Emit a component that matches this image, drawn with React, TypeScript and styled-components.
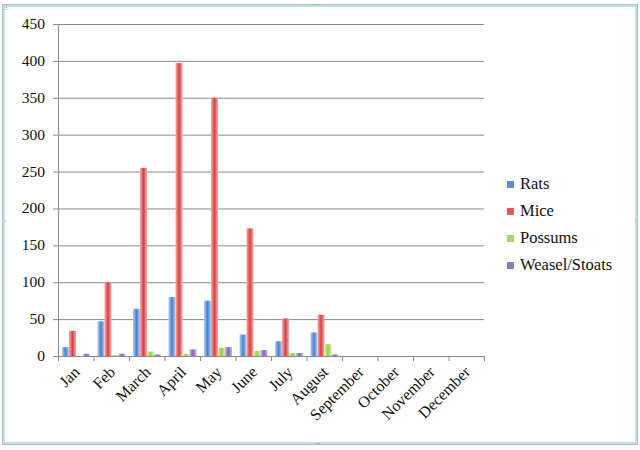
import React from 'react'
import styled, { createGlobalStyle } from 'styled-components'

const Global = createGlobalStyle`
  body { margin: 0; background: #fff; font-family: "Liberation Serif", serif; }
`

const Page = styled.div`
  width: 640px;
  height: 450px;
  padding: 5px 3px 6px 3px;
  box-sizing: border-box;
`

const Frame = styled.div`
  position: relative;
  height: 100%;
  box-sizing: border-box;
  border: 2px solid #c6dfe2;
  outline: 1px solid #9fc3c8;
  display: flex;
  align-items: center;
`

const Handle = styled.span<{ $pos: 'top' | 'bottom' | 'left' | 'right' | 'corner' }>`
  position: absolute;
  font-size: 6px;
  line-height: 6px;
  color: #6a7f86;
  letter-spacing: -1px;
  ${p => p.$pos === 'top' && 'top: -5px; left: 310px;'}
  ${p => p.$pos === 'bottom' && 'bottom: -5px; left: 310px;'}
  ${p => p.$pos === 'left' && 'left: -3px; top: 212px; writing-mode: vertical-rl;'}
  ${p => p.$pos === 'right' && 'right: -3px; top: 212px; writing-mode: vertical-rl;'}
  ${p => p.$pos === 'corner' && 'left: 0; top: -2px;'}
`

const Legend = styled.div`
  display: flex;
  flex-direction: column;
  gap: 8px;
  margin-left: 12px;
`

const LegendItem = styled.div`
  display: flex;
  align-items: center;
  gap: 6px;
  font-size: 16.5px;
  color: #111;
  height: 19px;
`

const Swatch = styled.span<{ $color: string }>`
  width: 7px;
  height: 7px;
  background: ${p => p.$color};
`

const months = ['Jan', 'Feb', 'March', 'April', 'May', 'June', 'July', 'August', 'September', 'October', 'November', 'December']
const data = [
  [12, 34, 0, 3], [47, 100, 1, 3], [64, 255, 6, 2], [80, 397, 3, 9],
  [75, 350, 11, 12], [29, 173, 7, 8], [20, 51, 4, 4], [32, 56, 16, 2],
]
const series = [
  { name: 'Rats', grad: 'gB', sw: '#5b8fd6' },
  { name: 'Mice', grad: 'gR', sw: '#e05a5a' },
  { name: 'Possums', grad: 'gG', sw: '#a8d65c' },
  { name: 'Weasel/Stoats', grad: 'gP', sw: '#9078c0' },
]

const X0 = 58, X1 = 484, Y0 = 357, YT = 25
const cat = (X1 - X0) / 12
const yOf = (v: number) => Y0 - (v / 450) * (Y0 - YT)

const Grad = ({ id, light, dark }: { id: string; light: string; dark: string }) => (
  <linearGradient id={id} x1="0" x2="1" y1="0" y2="0">
    <stop offset="0" stopColor={light} />
    <stop offset="0.5" stopColor={dark} />
    <stop offset="1" stopColor={light} />
  </linearGradient>
)

const Chart = () => (
  <svg width={490} height={437} style={{ flexShrink: 0 }}>
    <defs>
      <Grad id="gB" light="#b0d0f8" dark="#4a80cc" />
      <Grad id="gR" light="#ffaaaa" dark="#d04444" />
      <Grad id="gG" light="#dcf4a4" dark="#94cc44" />
      <Grad id="gP" light="#c8b8e8" dark="#8064b8" />
    </defs>
    <g transform="translate(-5,-7)" fontFamily="Liberation Serif, serif" fontSize="15" fill="#111">
      {[0, 50, 100, 150, 200, 250, 300, 350, 400, 450].map(v => (
        <g key={v}>
          <line x1={X0 - 5} x2={X1} y1={yOf(v) + 0.5} y2={yOf(v) + 0.5} stroke="#8a8a8a" />
          <text x={45} y={yOf(v) + 5} textAnchor="end" fontSize="15.5">{v}</text>
        </g>
      ))}
      <line x1={X0 + 0.5} x2={X0 + 0.5} y1={YT} y2={Y0 + 5} stroke="#8a8a8a" />
      {months.map((m, i) => {
        const tx = X0 + cat * (i + 1)
        const cx = X0 + cat * i + cat / 2 + 5
        return (
          <g key={m}>
            <line x1={tx + 0.5} x2={tx + 0.5} y1={Y0} y2={Y0 + 5} stroke="#8a8a8a" />
            <text x={cx} y={Y0 + 17} fontSize="16" textAnchor="end" transform={`rotate(-45 ${cx} ${Y0 + 17})`}>{m}</text>
          </g>
        )
      })}
      {data.map((row, i) =>
        row.map((v, s) => {
          const x = X0 + cat * i + 4 + s * 7
          const y = yOf(v)
          return <rect key={`${i}-${s}`} x={x} y={y} width={7} height={Y0 - y} fill={`url(#${series[s].grad})`} />
        })
      )}
    </g>
  </svg>
)

export default function App() {
  return (
    <Page>
      <Global />
      <Frame>
        <Handle $pos="corner">::</Handle>
        <Handle $pos="top">····</Handle>
        <Handle $pos="bottom">····</Handle>
        <Handle $pos="left">···</Handle>
        <Handle $pos="right">···</Handle>
        <Chart />
        <Legend>
          {series.map(s => (
            <LegendItem key={s.name}>
              <Swatch $color={s.sw} />
              {s.name}
            </LegendItem>
          ))}
        </Legend>
      </Frame>
    </Page>
  )
}
